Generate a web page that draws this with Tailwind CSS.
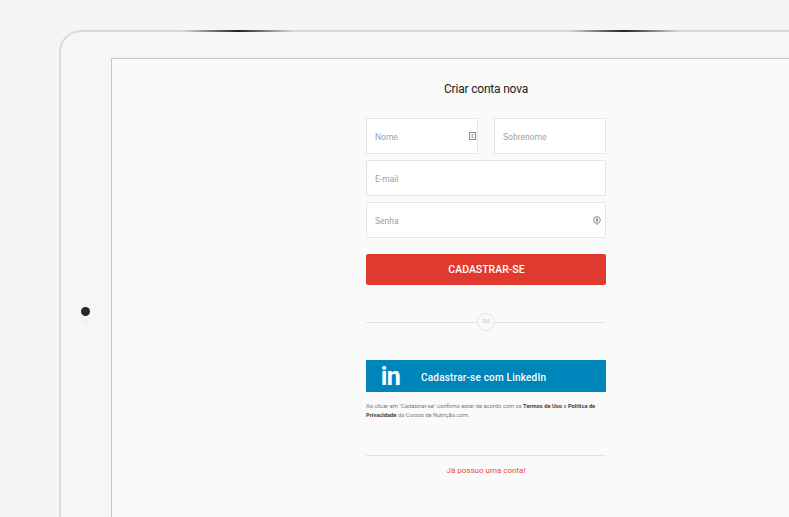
<!DOCTYPE html>
<html lang="pt-BR">
<head>
  <meta charset="UTF-8" />
  <title>Criar conta nova</title>
  <script src="https://cdn.jsdelivr.net/npm/@tailwindcss/browser@4"></script>
</head>
<body class="bg-[#f5f5f5] font-['Roboto',sans-serif] text-[#222]">
  <div class="relative h-[517px] w-[789px] overflow-hidden pl-[59px] pt-[30px]">
    <!-- tablet frame -->
    <div class="relative h-[487px] w-[730px] rounded-tl-[22px] border-l-2 border-t-2 border-[#d9d9d9] bg-[#f6f6f7] pl-[50px] pt-[26px]">
      <div class="absolute left-[122px] top-[-2px] h-[2px] w-[110px] bg-gradient-to-r from-transparent via-[#222] to-transparent"></div>
      <div class="absolute left-[508px] top-[-2px] h-[2px] w-[110px] bg-gradient-to-r from-transparent via-[#222] to-transparent"></div>
      <div class="absolute left-[20px] top-[275px] h-[9px] w-[9px] rounded-full bg-[#26262e]"></div>
      <div class="absolute left-[22px] top-[288px] h-[5px] w-[5px] rounded-full bg-[#f0f0f0]"></div>

      <!-- screen -->
      <div class="h-[459px] w-[679px] border-l border-t border-[#c4c4c4] bg-[#fafafa] pl-[254px] pt-[22px]">
        <div class="w-[240px]">
          <h1 class="text-center text-[12px] leading-[16px] tracking-[-0.2px] text-[#222]">Criar conta nova</h1>

          <div class="mt-[21px] flex gap-4">
            <div class="relative w-28">
              <input type="text" placeholder="Nome" class="h-9 w-full rounded-[2px] border border-[#e4e4e4] bg-white px-2 pt-[2px] text-[8.5px] placeholder:text-[#a0a0a0]" />
              <svg class="absolute right-[2px] top-[14px]" width="7" height="8" viewBox="0 0 7 8" fill="none" stroke="#8a8a8a">
                <rect x="0.5" y="0.5" width="6" height="7" />
                <path d="M2.5 2.5h2M2.5 4h2M2.5 5.5h2" stroke-width="0.8" />
              </svg>
            </div>
            <input type="text" placeholder="Sobrenome" class="h-9 w-28 rounded-[2px] border border-[#e4e4e4] bg-white px-2 pt-[2px] text-[8.5px] placeholder:text-[#a0a0a0]" />
          </div>

          <input type="text" placeholder="E-mail" class="mt-1.5 block h-9 w-full rounded-[2px] border border-[#e4e4e4] bg-white px-2 pt-[2px] text-[8.5px] placeholder:text-[#a0a0a0]" />

          <div class="relative mt-1.5">
            <input type="password" placeholder="Senha" class="block h-9 w-full rounded-[2px] border border-[#e4e4e4] bg-white px-2 pt-[2px] text-[8.5px] placeholder:text-[#a0a0a0]" />
            <svg class="absolute right-[5px] top-[14px]" width="8" height="9" viewBox="0 0 8 9" fill="none" stroke="#8a8a8a">
              <circle cx="4" cy="4" r="3.3" />
              <rect x="3" y="2.5" width="2" height="3" fill="#8a8a8a" stroke="none" />
              <path d="M4 7v2" />
            </svg>
          </div>

          <button class="mt-4 block h-[31px] w-full rounded-[2px] bg-[#e03a2f] pl-[1px] text-[10.5px] font-medium text-white">CADASTRAR-SE</button>

          <div class="relative mt-[28px] flex h-[18px] items-center justify-center">
            <div class="absolute inset-x-0 top-[9px] h-[1px] bg-[#e2e2e2]"></div>
            <span class="relative flex h-[18px] w-[18px] items-center justify-center rounded-full border border-[#e6e6e6] bg-[#fafafa] text-[6.5px] text-[#c4c4c4]">ou</span>
          </div>

          <a href="#" class="mt-[29px] flex h-8 items-center bg-[#0085ba] text-white">
            <span class="flex w-[55px] justify-center pr-[6px] text-[25px] font-bold leading-none tracking-[-0.5px]">in</span>
            <span class="pt-[2px] text-[10px] font-medium tracking-[0.2px]">Cadastrar-se com LinkedIn</span>
          </a>

          <p class="mt-[10px] text-[5.75px] leading-[8.5px] text-[#777]">
            Ao clicar em "Cadastrar-se" confirmo estar de acordo com os <b class="font-bold text-[#444]">Termos de Uso</b> e <b class="font-bold text-[#444]">Política de Privacidade</b> do Cursos de Nutrição.com.
          </p>

          <div class="mt-[36px] border-t border-[#e2e2e2] pt-[9px] text-center text-[8px] leading-[12px] text-[#e8493e]">Já possuo uma conta!</div>
        </div>
      </div>
    </div>
  </div>
</body>
</html>
